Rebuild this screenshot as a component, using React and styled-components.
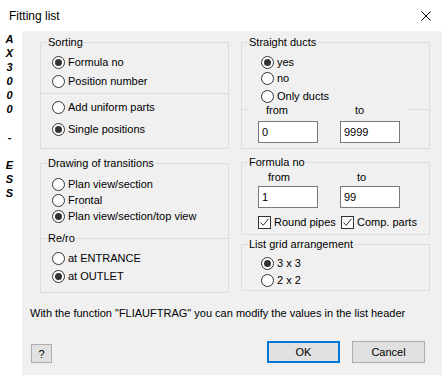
import React from "react";
import styled, { createGlobalStyle } from "styled-components";

const GlobalStyle = createGlobalStyle`
  html, body {
    margin: 0;
    padding: 0;
    background: #fff;
  }
  body {
    font-family: "Liberation Sans", Arial, sans-serif;
    font-size: 11px;
    color: #000;
  }
  * {
    box-sizing: border-box;
  }
`;

const Window = styled.div`
  width: 442px;
  height: 375px;
  display: flex;
  flex-direction: column;
  background: #fff;
  overflow: hidden;
`;

const TitleBar = styled.div`
  height: 31px;
  flex: none;
  display: flex;
  align-items: center;
  justify-content: space-between;
  padding: 0 11px 0 9px;
`;

const Title = styled.div`
  font-size: 12px;
  line-height: 16px;
`;

const CloseIcon = styled.svg`
  width: 10px;
  height: 10px;
  display: block;
`;

const Body = styled.div`
  flex: 1;
  display: flex;
`;

const SideStrip = styled.div`
  width: 22px;
  flex: none;
  display: flex;
  flex-direction: column;
  align-items: center;
  padding: 1px 3px 0 0;
  background: #fff;
`;

const SideChar = styled.div`
  height: 14px;
  line-height: 14px;
  font-weight: bold;
  font-style: italic;
  font-size: 11px;
`;

const Client = styled.div`
  flex: 1;
  background: #f0f0f0;
  display: flex;
  flex-direction: column;
`;

const Columns = styled.div`
  display: grid;
  grid-template-columns: 189px 189px;
  column-gap: 12px;
  align-items: start;
  margin: 5px 0 0 18px;
`;

const Column = styled.div`
  display: flex;
  flex-direction: column;
`;

const Group = styled.fieldset`
  margin: ${p => p.$mt || 0}px 0 0;
  padding: 0 0 ${p => p.$pb || 0}px;
  border: 1px solid #dcdcdc;
  min-width: 0;
  display: flex;
  flex-direction: column;
`;

const Legend = styled.legend`
  margin-left: 6px;
  padding: 0 1px;
  line-height: 13px;
  font-size: 11px;
`;

const Option = styled.div`
  display: flex;
  align-items: center;
  height: 16px;
  margin-top: ${p => p.$mt || 0}px;
  padding-left: ${p => p.$pl || 11}px;
  white-space: nowrap;
`;

const RadioMark = styled.span`
  width: 13px;
  height: 13px;
  flex: none;
  border: 1px solid #333;
  border-radius: 50%;
  background: #fff;
  margin-right: 3px;
  display: flex;
  align-items: center;
  justify-content: center;

  &::after {
    content: "";
    width: 7px;
    height: 7px;
    border-radius: 50%;
    background: ${p => (p.$checked ? "#333" : "transparent")};
  }
`;

const Divider = styled.div`
  height: 1px;
  background: #dcdcdc;
  margin-top: ${p => p.$mt || 0}px;
`;

const SubTitle = styled.div`
  display: flex;
  align-items: center;
  height: 13px;
  margin-top: ${p => p.$mt || 0}px;

  &::before {
    content: "";
    width: 6px;
    height: 1px;
    background: #dcdcdc;
  }
  &::after {
    content: "";
    flex: 1;
    height: 1px;
    background: #dcdcdc;
  }
  span {
    padding: 0 1px;
    line-height: 13px;
  }
`;

const FieldLabels = styled.div`
  display: flex;
  align-items: center;
  height: 12px;
  line-height: 12px;
  margin-top: ${p => p.$mt || 0}px;
  padding-left: ${p => p.$pl || 0}px;
`;

const RuledLabels = styled.div`
  display: flex;
  align-items: center;
  height: 12px;
  margin-top: ${p => p.$mt || 0}px;

  &::before {
    content: "";
    width: 6px;
    height: 1px;
    margin-top: -2px;
    background: #dcdcdc;
  }
  &::after {
    content: "";
    flex: 1;
    height: 1px;
    margin-top: -2px;
    background: #dcdcdc;
  }
`;

const LabelArea = styled.div`
  width: 159px;
  display: flex;
  line-height: 12px;
  padding-left: ${p => p.$pl || 0}px;
`;

const Label = styled.span`
  width: ${p => (p.$w ? `${p.$w}px` : "auto")};
  flex: none;
`;

const InputRow = styled.div`
  display: flex;
  gap: 22px;
  padding-left: 16px;
  margin-top: ${p => p.$mt || 0}px;
`;

const TextBox = styled.input`
  width: 60px;
  height: 22px;
  border: 1px solid #7a7a7a;
  background: #fff;
  padding: 0 3px;
  margin: 0;
  font: inherit;
  font-size: 11px;
  color: #000;
  outline: none;
`;

const CheckRow = styled.div`
  display: flex;
  align-items: center;
  height: 14px;
  padding-left: 16px;
  margin-top: ${p => p.$mt || 0}px;
`;

const CheckItem = styled.div`
  display: flex;
  align-items: center;
  width: ${p => (p.$w ? `${p.$w}px` : "auto")};
  white-space: nowrap;
`;

const CheckBox = styled.span`
  width: 13px;
  height: 13px;
  flex: none;
  border: 1px solid #333;
  background: #fff;
  margin-right: 3px;
  display: flex;
  align-items: center;
  justify-content: center;
`;

const Message = styled.div`
  margin: 13px 0 0 8px;
  line-height: 14px;
  white-space: nowrap;
`;

const ButtonRow = styled.div`
  display: flex;
  align-items: flex-end;
  gap: 12px;
  height: 22px;
  margin-top: 21px;
  padding: 0 17px 0 9px;
`;

const HelpButton = styled.div`
  width: 21px;
  height: 19px;
  margin-right: auto;
  border: 1px solid #adadad;
  background: #e1e1e1;
  display: flex;
  align-items: center;
  justify-content: center;
`;

const Button = styled.div`
  width: 73px;
  height: 22px;
  border: ${p => (p.$default ? "2px solid #0078d7" : "1px solid #adadad")};
  background: #e1e1e1;
  display: flex;
  align-items: center;
  justify-content: center;
`;

function Radio({ checked, label, mt, pl }) {
  return (
    <Option $mt={mt} $pl={pl}>
      <RadioMark $checked={checked} />
      {label}
    </Option>
  );
}

function Check({ label, w }) {
  return (
    <CheckItem $w={w}>
      <CheckBox>
        <svg width="11" height="11" viewBox="0 0 11 11">
          <path d="M1.5 5.5 L4.2 8.3 L9.5 1.8" fill="none" stroke="#333" strokeWidth="1" />
        </svg>
      </CheckBox>
      {label}
    </CheckItem>
  );
}

const sideText = ["A", "X", "3", "0", "0", "0", "\u00a0", "-", "\u00a0", "E", "S", "S"];

export default function App() {
  return (
    <>
      <GlobalStyle />
      <Window>
        <TitleBar>
          <Title>Fitting list</Title>
          <CloseIcon viewBox="0 0 10 10">
            <path d="M0.5 0.5 L9.5 9.5 M9.5 0.5 L0.5 9.5" stroke="#000" strokeWidth="1" />
          </CloseIcon>
        </TitleBar>
        <Body>
          <SideStrip>
            {sideText.map((c, i) => (
              <SideChar key={i}>{c}</SideChar>
            ))}
          </SideStrip>
          <Client>
            <Columns>
              <Column>
                <Group $pb={11}>
                  <Legend>Sorting</Legend>
                  <Radio checked label="Formula no" mt={5} />
                  <Radio label="Position number" mt={3} />
                  <Divider $mt={4} />
                  <Radio label="Add uniform parts" mt={5} />
                  <Radio checked label="Single positions" mt={6} />
                </Group>
                <Group $mt={8} $pb={8}>
                  <Legend>Drawing of transitions</Legend>
                  <Radio label="Plan view/section" mt={6} />
                  <Radio label="Frontal" />
                  <Radio checked label="Plan view/section/top view" />
                  <SubTitle $mt={8}>
                    <span>Re/ro</span>
                  </SubTitle>
                  <Radio label="at ENTRANCE" mt={5} />
                  <Radio checked label="at OUTLET" mt={2} />
                </Group>
              </Column>
              <Column>
                <Group $pb={5}>
                  <Legend>Straight ducts</Legend>
                  <Radio checked label="yes" mt={5} pl={19} />
                  <Radio label="no" pl={19} />
                  <Radio label="Only ducts" mt={2} pl={19} />
                  <RuledLabels>
                    <LabelArea $pl={18}>
                      <Label $w={89}>from</Label>
                      <Label>to</Label>
                    </LabelArea>
                  </RuledLabels>
                  <InputRow $mt={5}>
                    <TextBox readOnly value="0" />
                    <TextBox readOnly value="9999" />
                  </InputRow>
                </Group>
                <Group $mt={7} $pb={5}>
                  <Legend>Formula no</Legend>
                  <FieldLabels $mt={2} $pl={26}>
                    <Label $w={89}>from</Label>
                    <Label>to</Label>
                  </FieldLabels>
                  <InputRow $mt={3}>
                    <TextBox readOnly value="1" />
                    <TextBox readOnly value="99" />
                  </InputRow>
                  <CheckRow $mt={7}>
                    <Check label="Round pipes" w={83} />
                    <Check label="Comp. parts" />
                  </CheckRow>
                </Group>
                <Group $mt={3} $pb={2}>
                  <Legend>List grid arrangement</Legend>
                  <Radio checked label="3 x 3" mt={4} pl={19} />
                  <Radio label="2 x 2" mt={1} pl={19} />
                </Group>
              </Column>
            </Columns>
            <Message>
              With the function "FLIAUFTRAG" you can modify the values in the list header
            </Message>
            <ButtonRow>
              <HelpButton>?</HelpButton>
              <Button $default>OK</Button>
              <Button>Cancel</Button>
            </ButtonRow>
          </Client>
        </Body>
      </Window>
    </>
  );
}
